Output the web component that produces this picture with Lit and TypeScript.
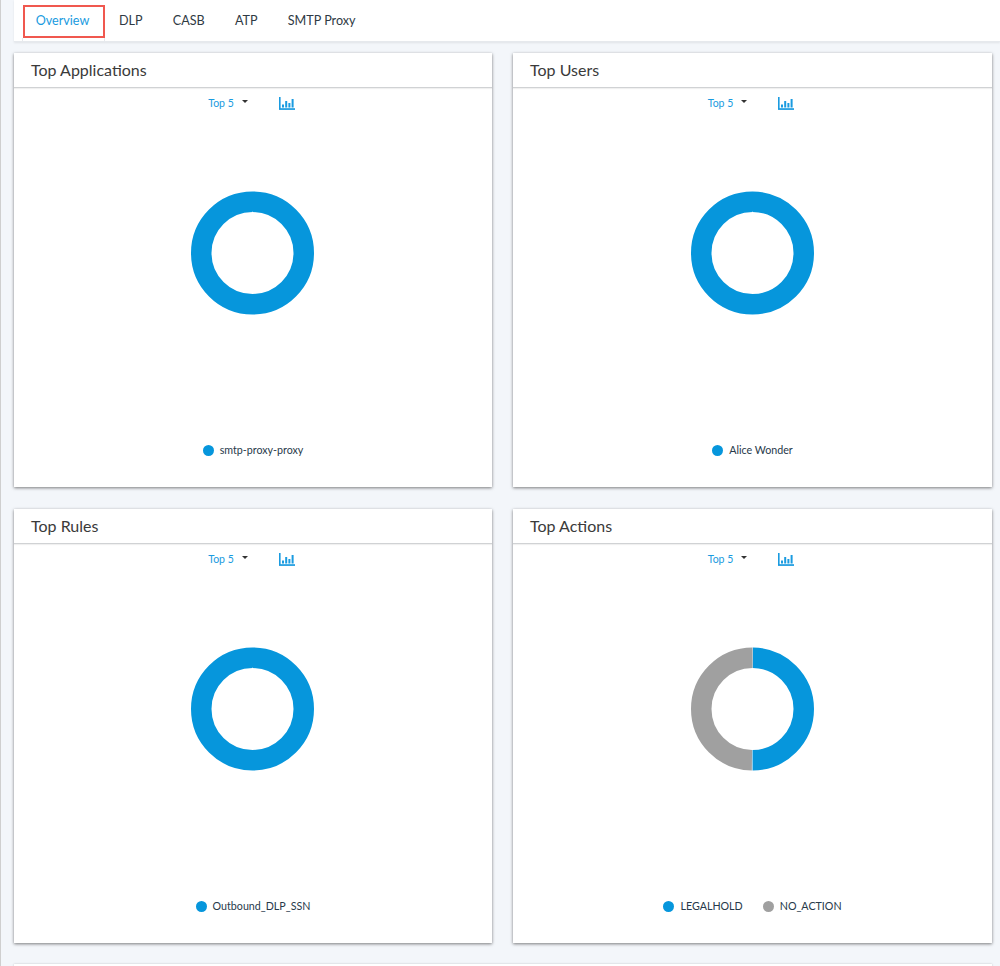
import { LitElement, html, css, svg } from 'lit'
import { customElement, property } from 'lit/decorators.js'

const BLUE = '#0696dc'
const GREY = '#a0a0a0'

type Slice = { label: string; value: number; color: string }

@customElement('donut-card')
export class DonutCard extends LitElement {
    @property() heading = ''
    @property({ type: Array }) slices: Slice[] = []

    static styles = css`
        :host {
            display: block;
            background: #fff;
            height: 434px;
            box-shadow: 0 1px 3px rgba(0, 0, 0, 0.5);
            font-family: Lato, sans-serif;
        }
        .head {
            height: 35px;
            box-sizing: border-box;
            padding: 6px 0 0 17px;
            font-size: 16px;
            line-height: 21px;
            color: #3a3a3a;
            border-bottom: 1px solid #d0d2d4;
            box-shadow: 0 1px 1px rgba(0, 0, 0, 0.06);
        }
        .tools {
            display: flex;
            align-items: center;
            justify-content: center;
            height: 30px;
            padding-right: 3px;
            font-size: 10.5px;
            color: #1a9be0;
        }
        .caret {
            width: 0;
            height: 0;
            margin: 0 0 3px 8px;
            border-left: 3.5px solid transparent;
            border-right: 3.5px solid transparent;
            border-top: 3.5px solid #333;
        }
        .tools svg {
            margin-left: 31px;
        }
        .chart {
            display: flex;
            justify-content: center;
            padding-top: 73px;
            padding-right: 1px;
        }
        .legend {
            display: flex;
            justify-content: center;
            gap: 20px;
            margin-top: 128px;
            font-size: 10.7px;
            line-height: 14px;
            color: #27394a;
        }
        .item {
            display: flex;
            align-items: center;
            gap: 6px;
        }
        .dot {
            width: 11px;
            height: 11px;
            border-radius: 50%;
        }
    `

    private renderSlices() {
        const total = this.slices.reduce((sum, s) => sum + s.value, 0)
        const r = 51.25
        const c = 2 * Math.PI * r
        const gap = this.slices.length > 1 ? 0.6 : 0
        let used = 0
        return this.slices.map((s) => {
            const len = (s.value / total) * c
            const node = svg`<circle cx="61.5" cy="62" r=${r} fill="none" stroke=${s.color} stroke-width="20.5"
                stroke-dasharray="${len - gap} ${c - len + gap}" stroke-dashoffset=${-used - gap / 2} transform="rotate(-90 61.5 62)"></circle>`
            used += len
            return node
        })
    }

    render() {
        return html`
            <div class="head">${this.heading}</div>
            <div class="tools">
                <span>Top 5</span>
                <span class="caret"></span>
                <svg width="16" height="13" viewBox="0 0 16 13" fill="#1a9be0">
                    <rect x="0" y="0" width="1.6" height="12"></rect>
                    <rect x="0" y="11.2" width="16" height="1.7"></rect>
                    <rect x="3" y="7.5" width="2" height="3"></rect>
                    <rect x="6.2" y="4" width="2" height="6.5"></rect>
                    <rect x="9.4" y="6" width="2" height="4.5"></rect>
                    <rect x="12.6" y="2" width="2" height="8.5"></rect>
                </svg>
            </div>
            <div class="chart">
                <svg width="123" height="124" viewBox="0 0 123 124">${this.renderSlices()}</svg>
            </div>
            <div class="legend">
                ${this.slices.map(
                    (s) => html`<div class="item">
                        <span class="dot" style="background:${s.color}"></span>${s.label}
                    </div>`
                )}
            </div>
        `
    }
}

@customElement('app-root')
export class AppRoot extends LitElement {
    static styles = css`
        :host {
            display: block;
            height: 966px;
            box-sizing: border-box;
            overflow: hidden;
            background: #f3f6fa;
            border-left: 1px solid #cfcfcf;
            padding-left: 13px;
            font-family: Lato, sans-serif;
        }
        .tabs {
            display: flex;
            height: 42px;
            box-sizing: border-box;
            padding: 5px 0 0 9px;
            background: #fff;
            border-bottom: 1px solid #e6e9ed;
            box-shadow: 0 1px 2px rgba(0, 0, 0, 0.08);
            font-size: 12.6px;
            color: #2f3a44;
        }
        .tab {
            height: 33px;
            line-height: 31px;
            margin-right: 30.2px;
        }
        .tab.active {
            position: relative;
            box-sizing: border-box;
            width: 82px;
            margin-right: 14px;
            padding-right: 3px;
            line-height: 28px;
            text-align: center;
            color: #1a9be0;
            border: 2px solid #f0584f;
        }
        .tab.active::after {
            content: '';
            position: absolute;
            top: 100%;
            left: -3px;
            right: -2px;
            height: 4px;
            margin-top: 2px;
            border-left: 1px solid #e6e9ed;
            border-right: 1px solid #e6e9ed;
        }
        .grid {
            display: grid;
            grid-template-columns: 478px 479px;
            gap: 22px 21px;
            padding-top: 11px;
        }
        .next {
            height: 10px;
            margin-top: 21px;
            background: #fff;
            box-shadow: 0 0 2px rgba(0, 0, 0, 0.2);
            width: 978px;
        }
    `

    render() {
        const one = (label: string): Slice[] => [{ label, value: 1, color: BLUE }]
        return html`
            <div class="tabs">
                <div class="tab active">Overview</div>
                <div class="tab">DLP</div>
                <div class="tab">CASB</div>
                <div class="tab">ATP</div>
                <div class="tab">SMTP Proxy</div>
            </div>
            <div class="grid">
                <donut-card heading="Top Applications" .slices=${one('smtp-proxy-proxy')}></donut-card>
                <donut-card heading="Top Users" .slices=${one('Alice Wonder')}></donut-card>
                <donut-card heading="Top Rules" .slices=${one('Outbound_DLP_SSN')}></donut-card>
                <donut-card
                    heading="Top Actions"
                    .slices=${[
                        { label: 'LEGALHOLD', value: 1, color: BLUE },
                        { label: 'NO_ACTION', value: 1, color: GREY },
                    ]}
                ></donut-card>
            </div>
            <div class="next"></div>
        `
    }
}
